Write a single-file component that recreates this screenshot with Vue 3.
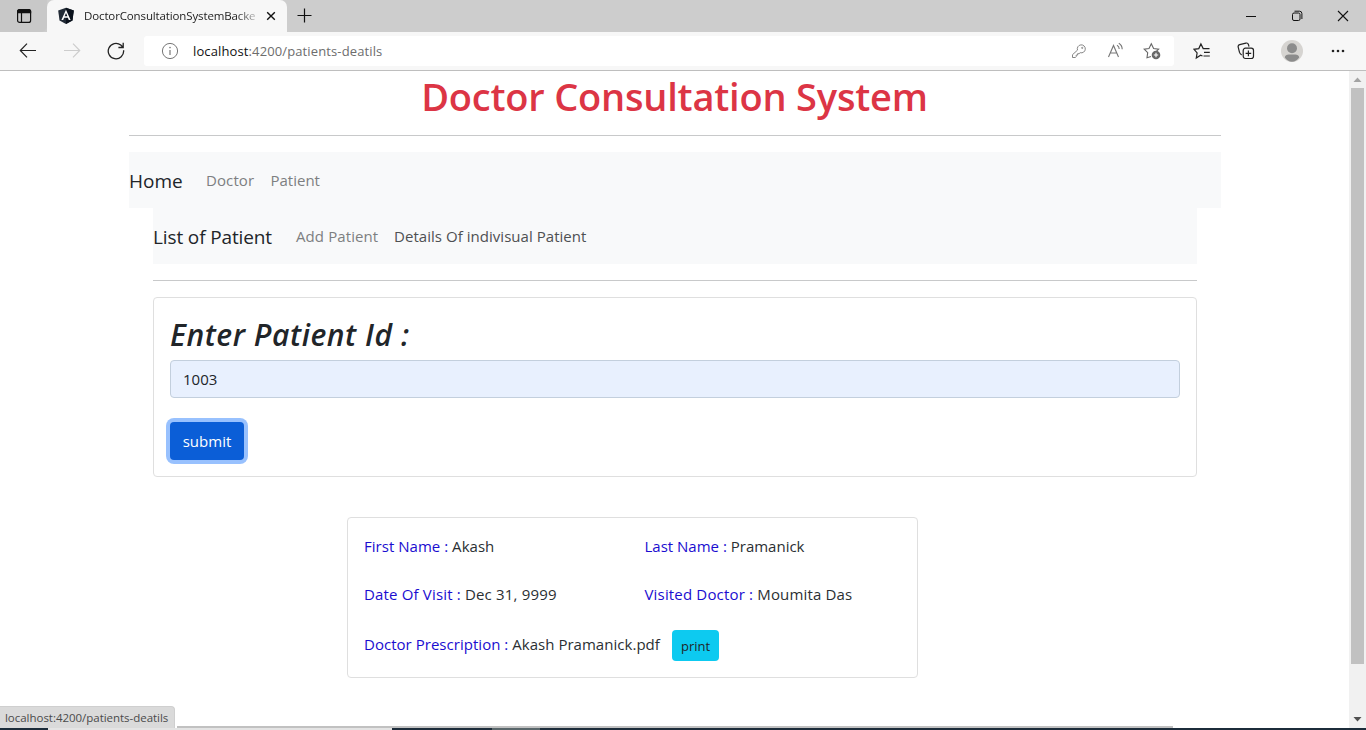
<script setup>
import { ref } from 'vue'

const patientId = ref('1003')
const visit = [
  [
    { label: 'First Name :', value: 'Akash', cls: 'f1' },
    { label: 'Last Name :', value: 'Pramanick', cls: 'f2' },
  ],
  [
    { label: 'Date Of Visit :', value: 'Dec 31, 9999', cls: 'f3' },
    { label: 'Visited Doctor :', value: 'Moumita Das', cls: 'f4' },
  ],
]
</script>

<template>
  <div class="window">
    <header class="tabstrip">
      <div class="tab-actions">
        <svg width="16" height="16" viewBox="0 0 16 16" fill="none" stroke="#111" stroke-width="1.2">
          <rect x="1.6" y="1.6" width="13" height="12.8" rx="2" />
          <path d="M1.6 4V3.6a2 2 0 0 1 2-2h9a2 2 0 0 1 2 2V4.6H1.6z" fill="#111" />
          <path d="M5.5 5v9" />
        </svg>
      </div>
      <div class="tab">
        <svg class="ng" width="18" height="18" viewBox="0 0 18 18">
          <path d="M9 .8 16.8 3.4 15.5 13.4 9 17 2.5 13.4 1.2 3.4z" fill="#222b36" />
          <path d="M9 .8 16.8 3.4 15.5 13.4 9 17z" fill="#0b121c" />
          <path d="M9 2.7 4.4 13h1.8l.9-2.3h3.8l.9 2.3h1.8zM9 5.9l1.4 3.4H7.6z" fill="#fff" />
        </svg>
        <span class="tab-title">DoctorConsultationSystemBacke</span>
        <svg class="close-tab" width="10" height="10" viewBox="0 0 10 10" stroke="#111" stroke-width="1.4"><path d="M1.2 1.2l7.6 7.6M8.8 1.2L1.2 8.8" /></svg>
      </div>
      <svg class="plus" width="16" height="16" viewBox="0 0 16 16" stroke="#111" stroke-width="1.2"><path d="M7.5 .5v14M.5 7.5h14" /></svg>
      <div class="controls">
        <svg width="12" height="12" viewBox="0 0 12 12" stroke="#111"><path d="M1 6.5h10" /></svg>
        <svg width="12" height="12" viewBox="0 0 12 12" fill="none" stroke="#111"><rect x="1.5" y="3" width="7.5" height="7.5" rx="1.5" /><path d="M3.5 1.2h5A2.4 2.4 0 0 1 10.9 3.6V9" /></svg>
        <svg width="12" height="12" viewBox="0 0 12 12" stroke="#111" stroke-width="1.1"><path d="M1 1l10 10M11 1L1 11" /></svg>
      </div>
    </header>

    <div class="toolbar">
      <svg class="back" width="18" height="16" viewBox="0 0 18 16" fill="none" stroke="#222" stroke-width="1.2"><path d="M17 7.5H1.5M8 .7 1.3 7.5 8 14.3" /></svg>
      <svg class="forward" width="18" height="16" viewBox="0 0 18 16" fill="none" stroke="#cdcdcd" stroke-width="1.2"><path d="M1 7.5h15.5M10 .7 16.7 7.5 10 14.3" /></svg>
      <svg class="reload" width="18" height="18" viewBox="0 0 18 18" fill="none" stroke="#222" stroke-width="1.3"><path d="M16.6 8.3A7.7 7.7 0 1 1 13.8 3.1L16 5.3M16.2 .8v4.7h-4.8" /></svg>
      <div class="address">
        <svg class="info" width="18" height="18" viewBox="0 0 18 18" fill="none" stroke="#777"><circle cx="9" cy="9" r="7.6" /><path d="M9 8v5" stroke-width="1.2" /><circle cx="9" cy="5.6" r=".8" fill="#777" stroke="none" /></svg>
        <span class="url"><b>localhost</b>:4200/patients-deatils</span>
        <svg class="key" width="16" height="16" viewBox="0 0 16 16" fill="none" stroke="#858585" stroke-width="1"><path d="M1.5 11.7 6.5 7.1A4 4 0 1 1 9.2 9.7L8.1 10.7H6.6v1.4H5.2v1.5L4.4 14.5H1.5z" /><circle cx="11.2" cy="4.9" r=".6" /></svg>
        <svg class="read" width="18" height="18" viewBox="0 0 18 18" fill="none" stroke="#777" stroke-width="1.1"><path d="M1.5 15 6.5 3.5l5 11.5M3.3 11h6.4M10 3.2c1.5.8 2.2 2 2.2 3.8M11.8 1.3c2.1 1.2 3.3 3 3.4 5.9" /></svg>
        <svg class="star" width="18" height="18" viewBox="0 0 18 18" fill="none" stroke="#666" stroke-width="1.1"><path d="M8 14.5 4 15.7l.7-5L1.2 7.2 6 6.5l2.3-4.8L10.6 6.5l5 .7-2 1.8" /><circle cx="13" cy="13" r="4.3" fill="#666" stroke="none" /><path d="M13 10.8v4.4M10.8 13h4.4" stroke="#fff" /></svg>
      </div>
      <svg class="favorites" width="18" height="18" viewBox="0 0 18 18" fill="none" stroke="#222" stroke-width="1.2"><path d="M9.5 14 7.6 13.2 3.3 16l.8-5.1L1 7.3l4.8-.7L7.9 2l2.3 4.6h6.3M11 10.3h5.8M10.5 14h6.3" /></svg>
      <svg class="collections" width="18" height="18" viewBox="0 0 18 18" fill="none" stroke="#222" stroke-width="1.2"><path d="M4.8 12.8C3.5 12.5 2.9 11.7 2.5 10.4L1.2 5.2c-.3-1.3.3-2.2 1.5-2.5l6.2-1.6c1.2-.3 2.2.3 2.6 1.6l.5 1.9" /><rect x="6.2" y="6.2" width="10.3" height="10.3" rx="2.2" /><path d="M11.4 8.6v5.6M8.6 11.4h5.6" /></svg>
      <svg class="avatar" width="22" height="22" viewBox="0 0 22 22"><circle cx="11" cy="11" r="11" fill="#d6d4d1" /><circle cx="11" cy="8.3" r="5" fill="#8c8c8c" /><path d="M3.8 17.5c0-2 2-3 4-3h6.4c2 0 4 1 4 3-1.8 2.7-4.2 4.2-7.2 4.2s-5.4-1.5-7.2-4.2z" fill="#8c8c8c" /></svg>
      <svg class="more" width="14" height="4" viewBox="0 0 14 4" fill="#222"><circle cx="2" cy="2" r="1.3" /><circle cx="7" cy="2" r="1.3" /><circle cx="12" cy="2" r="1.3" /></svg>
    </div>

    <div class="viewport">
      <main class="page">
        <h1><span>Doctor Consultation System</span></h1>
        <hr />
        <nav class="navbar">
          <a class="brand home">Home</a><a class="doctor">Doctor</a><a class="patient">Patient</a>
        </nav>
        <section class="inner">
          <nav class="navbar">
            <a class="brand list">List of Patient</a><a class="add">Add Patient</a><a class="active">Details Of indivisual Patient</a>
          </nav>
          <hr />
          <form class="card form" @submit.prevent>
            <label for="pid"><span>Enter Patient Id :</span></label>
            <input id="pid" v-model="patientId" />
            <button class="submit"><span>submit</span></button>
          </form>
          <div class="card details">
            <div v-for="(row, i) in visit" :key="i" class="row">
              <div v-for="f in row" :key="f.label" class="field"><span :class="f.cls"><i>{{ f.label }}</i> {{ f.value }}</span></div>
            </div>
            <div class="row last">
              <span class="f5"><i>Doctor Prescription :</i> Akash Pramanick.pdf</span>
              <button class="print"><span>print</span></button>
            </div>
          </div>
        </section>
      </main>
      <aside class="scrollbar">
        <svg width="9" height="5" viewBox="0 0 9 5"><path d="M.5 5 4.5 .5 8.5 5z" fill="#a3a3a3" /></svg>
        <div class="thumb"></div>
        <svg width="9" height="5" viewBox="0 0 9 5"><path d="M.5 0h8L4.5 4.5z" fill="#505050" /></svg>
      </aside>
    </div>
    <div class="hscroll"></div>
    <footer class="taskbar"><div class="search"></div><div class="task"></div></footer>
    <div class="status"><span>localhost:4200/patients-deatils</span></div>
  </div>
</template>

<style>
body { margin: 0; overflow: hidden; }
</style>

<style scoped>
* { box-sizing: border-box; }
.window { position: relative; width: 1366px; height: 730px; display: flex; flex-direction: column; overflow: hidden; background: #fff; color: #2b2f33; font-family: "Open Sans", "Noto Sans", sans-serif; font-size: 15px; }
svg { display: block; flex: none; }
span, a { white-space: nowrap; }
.tabstrip { height: 32px; background: #cdcdcd; display: flex; align-items: center; flex: none; }
.tab-actions { width: 47px; height: 32px; padding: 8px 0 0 16px; background: #c8c8c8; border-bottom-right-radius: 6px; }
.tab { width: 240px; height: 32px; background: #f7f7f7; border-radius: 7px 7px 0 0; display: flex; align-items: center; padding-left: 10px; }
.tab-title { width: 173px; margin-left: 9px; overflow: hidden; font-size: 11.5px; line-height: 20px; letter-spacing: -.13px; color: #222; -webkit-mask-image: linear-gradient(90deg, #000 88%, transparent 103%); mask-image: linear-gradient(90deg, #000 88%, transparent 103%); }
.close-tab { margin-left: 9px; }
.plus { margin-left: 10px; }
.controls { margin-left: auto; margin-right: 17px; display: flex; gap: 34px; }
.toolbar { height: 39px; flex: none; background: #f7f7f7; border-bottom: 1px solid #bebebe; display: flex; align-items: center; padding-left: 19px; }
.forward { margin-left: 26px; }
.reload { margin-left: 26px; }
.address { width: 1030px; height: 30px; margin-left: 19px; background: #fff; border-radius: 3px; display: flex; align-items: center; padding-left: 17px; }
.url { width: 877px; margin-left: 14px; font-size: 13px; line-height: 20px; letter-spacing: .12px; color: #6d6d6d; }
.url b { font-weight: 400; color: #111; }
.key { margin-left: 1px; }
.read { margin-left: 20px; }
.star { margin-left: 18px; }
.favorites { margin-left: 19px; }
.collections { margin-left: 26px; }
.avatar { margin-left: 26px; }
.more { margin-left: 28px; }
.viewport { flex: 1; min-height: 0; display: flex; }
.page { width: 1349px; padding: 0 128px 0 129px; }
h1 { margin: 0; padding-top: 1px; height: 64px; text-align: center; font-size: 38px; line-height: 48px; letter-spacing: -.2px; font-weight: 600; color: #dc3545; }
h1 span { margin-right: 1px; }
hr { margin: 0 0 16px; border: 0; height: 1px; background: #c8c9ca; }
.navbar { height: 56px; background: #f8f9fa; display: flex; align-items: center; color: #7d7f81; }
.brand { color: #212529; font-size: 19px; padding-top: 1px; }
.home { width: 77px; }
.doctor { width: 64.5px; letter-spacing: .1px; }
.list { width: 143px; letter-spacing: -.13px; }
.add { width: 98px; letter-spacing: .1px; }
.active { color: #4e5052; letter-spacing: .04px; }
.inner { padding: 0 24px; }
.inner hr { margin-top: 16px; }
.card { border: 1px solid #dfdfdf; border-radius: 4px; background: #fff; }
.form { height: 180px; padding: 16px; display: flex; flex-direction: column; align-items: flex-start; }
label { height: 46px; padding-top: 2px; line-height: 38px; font-size: 30px; font-weight: 600; font-style: italic; letter-spacing: .55px; color: #212529; }
input { width: 100%; height: 38px; border: 1px solid #c3cfdd; border-radius: 4px; background: #e8f0fe; padding: 0 12px; font: 15px "Open Sans", "Noto Sans", sans-serif; color: #212529; outline: 0; }
button { border: 0; border-radius: 4px; font-family: inherit; padding: 0; }
.submit { width: 74px; height: 38px; margin-top: 24px; background: #0b5ed7; color: #fff; font-size: 15px; box-shadow: 0 0 0 4px #98c1fe; }
.details { width: 571px; height: 161px; margin: 40px 0 0 194px; padding: 16px; }
.row { display: flex; height: 48px; line-height: 24px; letter-spacing: .03px; }
.field { flex: none; width: 280.5px; }
.f2 { letter-spacing: 0; }
.f3 { letter-spacing: .17px; }
.f4 { letter-spacing: .17px; }
.row i { font-style: normal; color: #1a0dd0; }
.last { align-items: flex-start; line-height: 28px; }
.f5 { width: 308px; }
.print { width: 47px; height: 31px; background: #0dcaf0; color: #212529; font-size: 13px; }
.scrollbar { width: 17px; background: #f1f1f1; display: flex; flex-direction: column; align-items: center; padding: 6px 0; justify-content: space-between; }
.thumb { width: 13px; height: 576px; background: #c1c1c1; margin-bottom: 47px; }
.hscroll { position: absolute; left: 177px; top: 726px; width: 996px; height: 2px; background: #c1c1c1; }
.taskbar { height: 2px; flex: none; background: #1c2c3a; display: flex; padding-left: 48px; }
.search { width: 344px; background: #e4e4e4; }
.task { width: 48px; margin-left: 100px; background: #59666a; }
.status { position: absolute; left: 0; top: 706px; width: 175px; height: 22px; background: #dadada; border: 1px solid #cfcfcf; border-left: 0; border-bottom: 0; border-top-right-radius: 4px; padding-left: 5px; font-size: 11.5px; line-height: 22px; letter-spacing: -.03px; color: #4a4a4a; }
</style>
